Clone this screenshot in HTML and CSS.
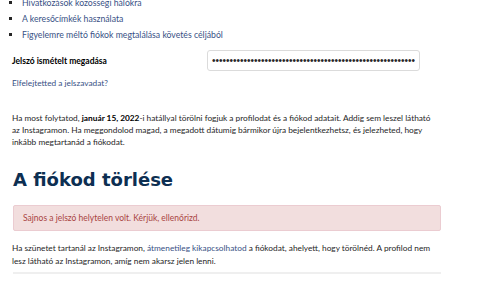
FILE: index.html
```html
<!DOCTYPE html>
<html lang="hu">
<head>
    <meta charset="UTF-8">
    <title>A fiókod törlése</title>
    <link rel="stylesheet" href="styles.css">
</head>
<body>
    <div class="page">
        <ul class="help-list">
            <li><a href="#">Hivatkozások közösségi hálókra</a></li>
            <li><a href="#">A keresőcímkék használata</a></li>
            <li><a href="#">Figyelemre méltó fiókok megtalálása követés céljából</a></li>
        </ul>

        <div class="form-row">
            <label for="confirm-password">Jelszó ismételt megadása</label>
            <input type="password" id="confirm-password" value="passwordpasswordpasswordpasswordpasswordpasswordpasswordpa">
        </div>

        <a href="#" class="forgot-link">Elfelejtetted a jelszavadat?</a>

        <p class="notice intro">Ha most folytatod, <strong>január 15, 2022</strong>-i hatállyal törölni fogjuk a profilodat és a fiókod adatait. Addig sem leszel látható az Instagramon. Ha meggondolod magad, a megadott dátumig bármikor újra bejelentkezhetsz, és jelezheted, hogy inkább megtartanád a fiókodat.</p>

        <h1>A fiókod törlése</h1>

        <div class="alert">Sajnos a jelszó helytelen volt. Kérjük, ellenőrizd.</div>

        <p class="notice pause">Ha szünetet tartanál az Instagramon, <a href="#">átmenetileg kikapcsolhatod</a> a fiókodat, ahelyett, hogy törölnéd. A profilod nem lesz látható az Instagramon, amíg nem akarsz jelen lenni.</p>

        <hr class="divider">
    </div>
</body>
</html>
```

FILE: styles.css
```css
body {
    margin: 0;
    font-family: Lato, sans-serif;
    font-size: 8.3px;
    color: #262626;
    background-color: #fff;
    overflow: hidden;
}

a {
    color: #385185;
    text-decoration: none;
}

.page {
    width: 429px;
    padding-left: 12px;
}

.help-list {
    list-style: square;
    margin: -5px 0 0;
    padding-left: 10px;
    font-size: 8.7px;
}

.help-list li {
    line-height: 16px;
}

.form-row {
    display: flex;
    align-items: center;
    margin-top: 7px;
    width: 408px;
}

.form-row label {
    font-weight: 700;
    font-size: 8.5px;
    color: #000;
    width: 195px;
}

.form-row input {
    flex: 1;
    height: 21px;
    box-sizing: border-box;
    border: 1px solid #dbdbdb;
    border-radius: 3px;
    padding: 0 4px;
    font-size: 10px;
    color: #262626;
}

.forgot-link {
    display: block;
    margin-top: 6px;
    line-height: 12px;
    font-size: 8.3px;
}

.notice {
    margin: 23px 0 0;
    line-height: 12px;
}

.notice strong {
    color: #000;
}

.notice.intro {
    max-width: 420px;
}

.notice.pause {
    margin-top: 11px;
    line-height: 13px;
}

h1 {
    font-family: 'DejaVu Sans', sans-serif;
    font-size: 18px;
    color: #0d2f52;
    margin: 18px 0 0 1px;
    line-height: 28px;
}

.alert {
    margin: 11px 0 0 1px;
    padding: 6px 9px;
    line-height: 12px;
    background-color: #f2dede;
    border: 1px solid #ebccd1;
    border-radius: 2px;
    color: #a94442;
    font-size: 8.5px;
}

.divider {
    margin: 4px 0 0 1px;
    border: 0;
    height: 2px;
    background-color: #efefef;
}
```
